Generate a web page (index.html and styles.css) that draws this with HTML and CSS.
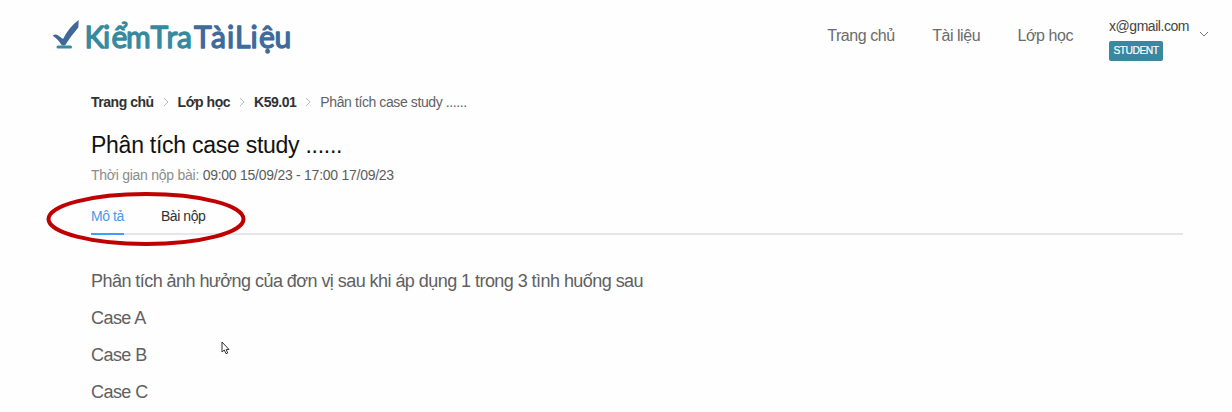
FILE: index.html
```html
<!DOCTYPE html>
<html lang="vi">
<head>
<meta charset="UTF-8" />
<meta name="viewport" content="width=device-width, initial-scale=1.0" />
<title>KiểmTraTàiLiệu</title>
<link rel="stylesheet" href="styles.css">
</head>
<body>
  <header>
    <a href="#" class="logo" aria-label="KiểmTraTàiLiệu">
      <svg width="246" height="50" viewBox="0 0 246 50">
        <path class="check" d="M0.700 25.700 Q3 23.500 5.500 25 L11 29 Q17 17 26.700 10 L26.300 17.500 Q18.500 26.500 13 35.500 H10 Q5.500 28.500 0.700 25.700 Z" />
        <path class="base" d="M6 37 H18.500" />
        <text class="green" y="38" x="32.5 51 59.5 74 98.5 114.500 125">KiểmTra</text>
        <text class="blue" y="38" x="142 159 175 183 198.500 207 222.500">TàiLiệu</text>
      </svg>
    </a>
    <nav>
      <a href="#">Trang chủ</a>
      <a href="#">Tài liệu</a>
      <a href="#">Lớp học</a>
    </nav>
    <div class="user">
      <div>
        <div class="email">x@gmail.com</div>
        <span class="role">STUDENT</span>
      </div>
      <svg class="chevron" width="10" height="6" viewBox="0 0 10 6"><path d="M1 1 L5 5 L9 1" /></svg>
    </div>
  </header>

  <main>
    <div class="breadcrumb">
      <a href="#">Trang chủ</a>
      <svg width="6" height="10" viewBox="0 0 6 10"><path d="M1 1 L5 5 L1 9" /></svg>
      <a href="#">Lớp học</a>
      <svg width="6" height="10" viewBox="0 0 6 10"><path d="M1 1 L5 5 L1 9" /></svg>
      <a href="#">K59.01</a>
      <svg width="6" height="10" viewBox="0 0 6 10"><path d="M1 1 L5 5 L1 9" /></svg>
      <span>Phân tích case study ......</span>
    </div>

    <h1>Phân tích case study ......</h1>
    <p class="time">Thời gian nộp bài: <span>09:00 15/09/23 - 17:00 17/09/23</span></p>

    <div class="tabs">
      <a href="#" class="tab active">Mô tả</a>
      <a href="#" class="tab">Bài nộp</a>
      <!-- red marker around the tabs -->
      <svg class="marker" width="202" height="56" viewBox="0 0 202 56"><ellipse cx="101" cy="28" rx="97.500" ry="25" /></svg>
    </div>

    <div class="content">
      <p>Phân tích ảnh hưởng của đơn vị sau khi áp dụng 1 trong 3 tình huống sau</p>
      <p>Case A</p>
      <p>Case B</p>
      <p>Case C</p>
    </div>
  </main>

  <svg class="cursor" width="9" height="14" viewBox="0 0 9 14"><path d="M1 1 V11 L3.300 9 L5 12.700 L6.700 12 L5.200 8.500 H8 Z" /></svg>
</body>
</html>
```

FILE: styles.css
```css
:root {
  --teal: #38889f;
  --blue: #409eff;
}
* { box-sizing: border-box; margin: 0; padding: 0; }
body { height: 412px; overflow: hidden; background: #fefefe; font-family: "Liberation Sans", Arial, sans-serif; color: #606266; }
a { color: inherit; text-decoration: none; }
svg { display: block; fill: none; }

header { display: flex; height: 72px; padding: 10px 23px 0 52px; }
.logo { width: 246px; }
.logo text { font-family: Lato, sans-serif; font-size: 30px; font-weight: 400; stroke-width: 1.3; stroke-linejoin: round; }
.logo .green { fill: #368aa0; stroke: #368aa0; }
.logo .blue { fill: #3e6a9c; stroke: #3e6a9c; }
.check { fill: #3f6799; }
.base { stroke: #368aa0; stroke-width: 3; stroke-linecap: round; }
nav { display: flex; gap: 37.500px; margin-left: auto; padding-top: 16px; font-size: 16px; line-height: 20px; letter-spacing: -0.450px; color: #6b6b6b; }
.user { display: flex; width: 100px; margin-left: 36px; justify-content: space-between; }
.email { padding-top: 8px; font-size: 14px; line-height: 16px; letter-spacing: -0.450px; color: #444; }
.role { display: block; width: 54px; height: 20px; margin-top: 7px; border-radius: 2px; background: var(--teal); color: #fff; font-size: 10.300px; line-height: 19px; letter-spacing: -0.500px; text-align: center; -webkit-text-stroke: 0.200px #fff; }
.chevron { margin-top: 21px; stroke: #777; }

main { padding: 21px 49px 0 91px; }
.breadcrumb { display: flex; align-items: center; height: 18px; font-size: 14px; line-height: 18px; letter-spacing: -0.400px; }
.breadcrumb a { font-weight: 700; letter-spacing: -0.480px; color: #303133; }
.breadcrumb svg { margin: 0 9px; stroke: #b4b8c0; }
h1 { margin-top: 21px; font-size: 23px; font-weight: 400; line-height: 26px; letter-spacing: -0.260px; color: #111; }
.time { margin-top: 9px; font-size: 14px; line-height: 16px; letter-spacing: -0.260px; color: #8c8c8c; }
.time span { color: #5c5c5c; }

.tabs { position: relative; display: flex; gap: 37px; height: 52px; border-bottom: 2px solid #e4e6ea; font-size: 14px; line-height: 16px; letter-spacing: -0.430px; color: #303133; }
.tab { height: 52px; padding-top: 25px; }
.tab.active { border-bottom: 2px solid var(--blue); color: #4c98e8; }
.marker { position: absolute; left: -46px; top: 8px; stroke: #c00000; stroke-width: 4; }

.content { padding-top: 36px; font-size: 18px; line-height: 20px; letter-spacing: -0.550px; color: #606060; }
.content p { margin-bottom: 17px; }

.cursor { position: absolute; left: 221px; top: 341px; }
.cursor path { fill: #fff; stroke: #333; stroke-width: 1; }
```
